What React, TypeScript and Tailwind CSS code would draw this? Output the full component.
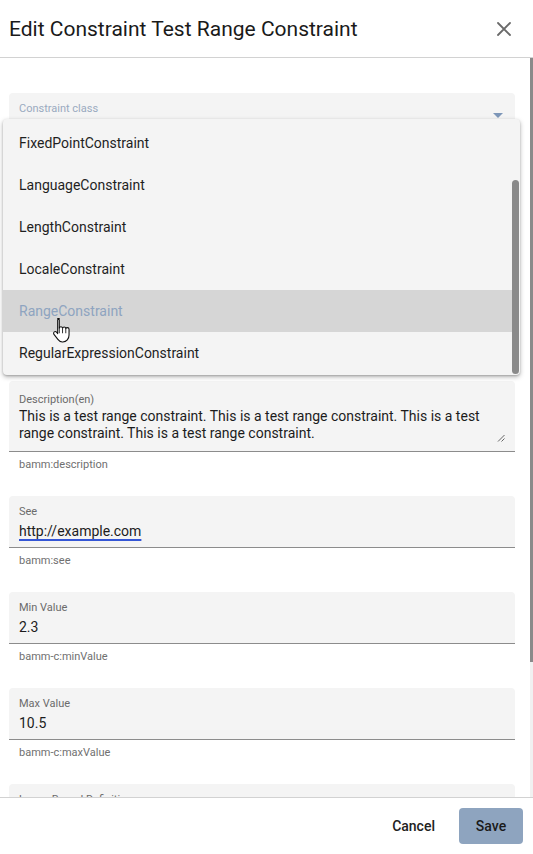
import React from 'react';

const menuItems = [
  'FixedPointConstraint',
  'LanguageConstraint',
  'LengthConstraint',
  'LocaleConstraint',
  'RangeConstraint',
  'RegularExpressionConstraint',
];

type FieldProps = {
  label: string;
  hint: string;
  children?: React.ReactNode;
  labelClass?: string;
};

const Field = ({ label, hint, children, labelClass }: FieldProps) => (
  <div>
    <div className="rounded-t-[4px] border-b border-[#8c8c8c] bg-[#f4f4f4] px-[10px] pt-[9px] pb-[7px]">
      <div className={`text-[11px] leading-[13px] ${labelClass ?? 'text-[#6b6b6b]'}`}>{label}</div>
      <div className="mt-[4px] min-h-[18px] text-[14px] leading-[18px] text-[#1c1c1c]">{children}</div>
    </div>
    <div className="h-[44px] px-[10px] pt-[6px] text-[11px] leading-[13px] text-[#707070]">{hint}</div>
  </div>
);

const HandCursor = () => (
  <svg width="20" height="26" viewBox="0 0 18 24" className="absolute left-[49px] top-[27px]">
    <path
      d="M5 1.5c.9 0 1.5.6 1.5 1.5v7.2c.2-.8.8-1.2 1.5-1.2.8 0 1.4.6 1.5 1.4.2-.7.8-1.1 1.5-1.1.8 0 1.4.6 1.5 1.5.2-.6.7-1 1.4-1 .9 0 1.6.7 1.6 1.6v5.3c0 3.5-2.3 6.3-5.8 6.3H9.3c-1.8 0-3.1-.9-4.1-2.3L1.6 16c-.6-.8-.4-1.8.3-2.3.7-.5 1.6-.3 2.2.4l.9 1.2V3c0-.9.6-1.5 1.5-1.5z"
      fill="#fff"
      stroke="#111"
      strokeWidth="1"
      strokeLinejoin="round"
    />
    <path d="M9.5 10.5v4.5M12.5 11v4M6.5 10v5" stroke="#111" strokeWidth="0.8" />
  </svg>
);

export default function App() {
  return (
    <div className="flex h-[854px] w-[533px] flex-col overflow-hidden bg-white font-['Roboto',sans-serif]">
      <header className="flex h-[58px] shrink-0 items-center justify-between border-b border-[#d2d2d2] pl-[9px] pr-[22px]">
        <h1 className="text-[21px] leading-[26px] text-[#1a1a1a]">Edit Constraint Test Range Constraint</h1>
        <svg width="14" height="14" viewBox="0 0 14 14" className="mt-[1px]">
          <path d="M1 1l12 12M13 1L1 13" stroke="#6a6a6a" strokeWidth="1.8" strokeLinecap="round" />
        </svg>
      </header>

      <div className="flex min-h-0 flex-1">
        <div className="flex-1 overflow-hidden pl-[9px] pr-[15px] pt-[35px]">
          <div className="relative">
            <Field label="Constraint class" hint="bamm:constraintClass" labelClass="text-[#9aaac0]">
              RangeConstraint
            </Field>
            <div className="pointer-events-none absolute right-[12px] top-[20px] h-0 w-0 border-x-[5px] border-t-[5px] border-x-transparent border-t-[#7d96b8]" />
            <Field label="Name" hint="bamm:name">
              TestRangeConstraint
            </Field>
            <Field label="Preferred Name(en)" hint="bamm:preferredName">
              Test Range Constraint
            </Field>

            <div className="absolute left-[-6px] top-[26px] z-10 flex h-[256px] w-[517px] rounded-[4px] bg-[#f4f4f4] shadow-[0_2px_5px_rgba(0,0,0,0.28),0_1px_2px_rgba(0,0,0,0.18)]">
              <div className="flex-1 pt-[3px]">
                {menuItems.map(item => {
                  const active = item === 'RangeConstraint';
                  return (
                    <div
                      key={item}
                      className={`relative flex h-[42px] items-center pl-[16px] text-[14px] ${
                        active ? 'bg-[#d6d6d6] text-[#8ea4c0]' : 'text-[#1f1f1f]'
                      }`}
                    >
                      {item}
                      {active && <HandCursor />}
                    </div>
                  );
                })}
              </div>
              <div className="w-[8px] pt-[61px]">
                <div className="h-[194px] w-[7px] rounded-full bg-[#8a8a8a]" />
              </div>
            </div>
          </div>

          <div>
            <div className="rounded-t-[4px] border-b border-[#8c8c8c] bg-[#f4f4f4] px-[10px] pt-[12px] pb-[9px]">
              <div className="text-[11px] leading-[13px] text-[#6b6b6b]">Description(en)</div>
              <div className="relative mt-[2px] pr-[10px] text-[14px] leading-[17px] text-[#1c1c1c]">
                This is a test range constraint. This is a test range constraint. This is a test range constraint. This is a test range constraint.
                <svg width="8" height="8" viewBox="0 0 8 8" className="absolute bottom-[0px] right-[0px]">
                  <path d="M1 7.5L7.5 1M4.5 7.5L7.5 4.5" stroke="#555" strokeWidth="0.9" />
                </svg>
              </div>
            </div>
            <div className="h-[44px] px-[10px] pt-[6px] text-[11px] leading-[13px] text-[#707070]">bamm:description</div>
          </div>

          <Field label="See" hint="bamm:see">
            <span className="underline decoration-[#3456d6] decoration-2 underline-offset-[3px]">http://example.com</span>
          </Field>
          <Field label="Min Value" hint="bamm-c:minValue">
            2.3
          </Field>
          <Field label="Max Value" hint="bamm-c:maxValue">
            10.5
          </Field>
          <Field label="Lower Bound Definition" hint="bamm-c:lowerBoundDefinition">
            AT_LEAST
          </Field>
        </div>
        <div className="w-[3px] shrink-0 bg-[#f1f1f1]">
          <div className="h-[604px] bg-[#8a8a8a]" />
        </div>
      </div>

      <footer className="flex h-[57px] shrink-0 items-center justify-end gap-[10px] border-t border-[#d2d2d2] pr-[10px]">
        <button className="h-[36px] px-[14px] text-[14px] font-medium text-[#222]">Cancel</button>
        <button className="h-[36px] w-[64px] rounded-[4px] bg-[#8ea4bf] text-[14px] font-medium text-[#1a1a1a]">Save</button>
      </footer>
    </div>
  );
}
